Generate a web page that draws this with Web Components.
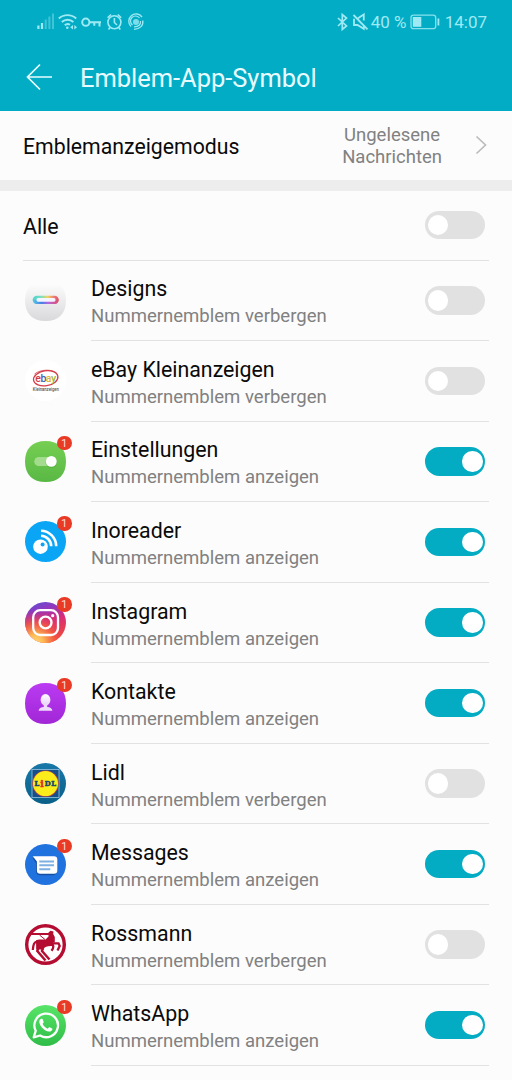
<!DOCTYPE html>
<html lang="de">
<head>
<meta charset="utf-8">
<title>Emblem-App-Symbol</title>
<style>
    body {
        margin: 0;
        background: #fcfcfc;
        font-family: Roboto, "Liberation Sans", sans-serif;
        overflow: hidden;
    }
</style>
</head>
<body>
<badge-settings></badge-settings>

<script>
const ICONS = {
    designs: `
        <defs>
            <linearGradient id="bg" x2="0" y2="1"><stop offset=".1" stop-color="#fcfcfc"/><stop offset="1" stop-color="#d9d9dc"/></linearGradient>
            <linearGradient id="rb"><stop offset="0" stop-color="#4ed3cb"/><stop offset=".3" stop-color="#75dfc6"/><stop offset=".58" stop-color="#f0d45e"/><stop offset=".8" stop-color="#f08079"/><stop offset="1" stop-color="#e04e68"/></linearGradient>
            <linearGradient id="rc"><stop offset="0" stop-color="#56c9e4"/><stop offset=".35" stop-color="#4a7fe8"/><stop offset=".6" stop-color="#b567dc"/><stop offset="1" stop-color="#e04e68"/></linearGradient>
        </defs>
        <path d="M20.500 0C33.500 0 41 7.500 41 20.500S33.500 41 20.500 41 0 33.500 0 20.500 7.500 0 20.500 0Z" fill="url(#bg)"/>
        <rect x="7.700" y="15.700" width="26" height="8.300" rx="4.150" fill="url(#rb)"/>
        <path d="M7.700 19.800H33.700A4.150 4.150 0 0 1 29.500 24H11.900A4.150 4.150 0 0 1 7.700 19.800Z" fill="url(#rc)"/>
        <rect x="11.500" y="18.100" width="19" height="3.600" rx="1.600" fill="#f5f5ff"/>`,
    ebay: `
        <circle cx="20.500" cy="20.500" r="20.500" fill="#fff"/>
        <ellipse cx="20.700" cy="18.300" rx="12.300" ry="7.500" transform="rotate(-9 20.700 18.300)" fill="none" stroke="#d43c49" stroke-width="1.300"/>
        <path d="M9.500 14C15 9.500 27 8.500 32 13.500" fill="none" stroke="#d43c49" stroke-width=".8"/>
        <text y="22" font-size="10.500" font-weight="500" letter-spacing="-.5"><tspan x="10.300" fill="#d23b49">e</tspan><tspan fill="#3e62b4">b</tspan><tspan fill="#e3b332">a</tspan><tspan fill="#9bb83c">y</tspan></text>
        <text x="7.800" y="30.700" font-size="4.800" font-weight="500" textLength="26" lengthAdjust="spacingAndGlyphs" fill="#5c5050">Kleinanzeigen</text>`,
    settings: `
        <defs><linearGradient id="bg" x2="0" y2="1"><stop offset="0" stop-color="#76cf53"/><stop offset="1" stop-color="#59b844"/></linearGradient></defs>
        <path d="M20.500 0C33.500 0 41 7.500 41 20.500S33.500 41 20.500 41 0 33.500 0 20.500 7.500 0 20.500 0Z" fill="url(#bg)"/>
        <rect x="9.300" y="16" width="19" height="9" rx="4.500" fill="#a4dc8e"/>
        <circle cx="26.300" cy="21.200" r="5.700" fill="#3f9832" opacity=".35"/>
        <circle cx="26.300" cy="20.400" r="5.400" fill="#fff"/>`,
    inoreader: `
        <circle cx="20.500" cy="20.500" r="20.500" fill="#0ba5f5"/>
        <circle cx="15.500" cy="25.700" r="7.300" fill="#fff"/>
        <circle cx="17.600" cy="23.600" r="2" fill="#0ba5f5"/>
        <path d="M16 14.800A10.500 10.500 0 0 1 26.200 25.300M16 9.800A15.500 15.500 0 0 1 31.200 25.300" fill="none" stroke="#fff" stroke-width="2.600"/>`,
    instagram: `
        <defs>
            <linearGradient id="bg" x2=".35" y2="1"><stop offset="0" stop-color="#5353d5"/><stop offset=".3" stop-color="#9038c0"/><stop offset=".6" stop-color="#d82c78"/><stop offset="1" stop-color="#ee4540"/></linearGradient>
            <radialGradient id="sun" cx=".25" cy="1" r=".8"><stop offset="0" stop-color="#ffdc7d"/><stop offset=".25" stop-color="#fdbb55"/><stop offset=".6" stop-color="#f4603f" stop-opacity=".8"/><stop offset="1" stop-color="#e03060" stop-opacity="0"/></radialGradient>
        </defs>
        <circle cx="20.500" cy="20.500" r="20.500" fill="url(#bg)"/>
        <circle cx="20.500" cy="20.500" r="20.500" fill="url(#sun)"/>
        <rect x="8.200" y="8.200" width="24.800" height="24.800" rx="7" fill="none" stroke="#fff" stroke-width="2.300"/>
        <circle cx="20.600" cy="20.500" r="5.900" fill="none" stroke="#fff" stroke-width="2.400"/>
        <circle cx="27.700" cy="13.700" r="1.600" fill="#fff"/>`,
    contacts: `
        <defs>
            <linearGradient id="bg" x2="0" y2="1"><stop offset="0" stop-color="#ba3bf3"/><stop offset="1" stop-color="#a127d6"/></linearGradient>
            <linearGradient id="fg" x2="0" y2="1"><stop offset="0" stop-color="#fff"/><stop offset="1" stop-color="#e9cffa"/></linearGradient>
        </defs>
        <path d="M20.500 0C33.500 0 41 7.500 41 20.500S33.500 41 20.500 41 0 33.500 0 20.500 7.500 0 20.500 0Z" fill="url(#bg)"/>
        <ellipse cx="20.500" cy="16.800" rx="4.900" ry="5.800" fill="url(#fg)"/>
        <path d="M18.800 21.500H22.200V24C25 24.200 27.200 25.300 27.400 27.800H13.600C13.800 25.300 16 24.200 18.800 24Z" fill="#eedafa"/>`,
    lidl: `
        <defs><linearGradient id="bg" x2="0" y2="1"><stop offset="0" stop-color="#1878a8"/><stop offset="1" stop-color="#096089"/></linearGradient></defs>
        <circle cx="20.500" cy="20.500" r="20.500" fill="url(#bg)"/>
        <rect x="7" y="6.500" width="27" height="28" fill="#174f8b" stroke="#8bb8d6" stroke-width=".9"/>
        <circle cx="20.500" cy="20.600" r="13.200" fill="#cf4a35"/>
        <circle cx="20.500" cy="20.600" r="12.500" fill="#fbed1c"/>
        <g font-family="DejaVu Serif" font-weight="700" font-size="6.800" fill="#16446e" stroke="#16446e" stroke-width=".5">
            <text x="9.600" y="23.200">L</text><text x="19.700" y="23.200">D</text><text x="26.200" y="23.200">L</text>
            <text x="15.300" y="23.900" font-size="9" fill="#d92c2c" stroke="#d92c2c">i</text>
        </g>`,
    messages: `
        <circle cx="20.500" cy="20.500" r="20.500" fill="#2072df"/>
        <path d="M7.500 13.800 11 19V27.500Q11.500 31 15 31.200H27.500Q31.500 31.200 32 27.500V15Z" fill="#154fa3"/>
        <path d="M7.800 12.300H29Q32.300 12.300 32.300 15.600V26.500Q32.300 29.800 29 29.800H15.200Q11.900 29.800 11.900 26.500V17.500Z" fill="#fff"/>
        <path d="M14.300 17.400H29M14.300 21.300H29M14.300 25.200H25.300" stroke="#7fb0e2" stroke-width="2"/>`,
    rossmann: `
        <circle cx="20.500" cy="20.500" r="18.800" fill="#fff" stroke="#b40d31" stroke-width="3.400"/>
        <path d="M11 16.300 14 15.500H20.500L23.500 12.500V8.500L25.500 6.800 28.500 7.500 28.200 10 29.800 13V18.500H28L27 22C22.500 21.800 20 22.500 18 25.500H11.200Z" fill="#b40d31"/>
        <g fill="none" stroke="#b40d31">
            <path d="M6 10H24" stroke-width="2"/>
            <path d="M14.500 11 20 15.500" stroke-width="1"/>
            <path d="M12.500 17.500C9 17.800 8.300 20.500 7.800 26" stroke-width="2.200"/>
            <path d="M27 19.300H33.500L34.700 22 32.500 26.500M26 20.500C29 21 29 23.500 26.500 26.800" stroke-width="2.300"/>
            <path d="M13.500 23.500 12.300 27 20.500 36.500M18 24 17 27 24.500 35.500" stroke-width="2.500"/>
        </g>`,
    whatsapp: `
        <defs><linearGradient id="bg" x2="0" y2="1"><stop offset="0" stop-color="#57e468"/><stop offset="1" stop-color="#2fbd48"/></linearGradient></defs>
        <circle cx="20.500" cy="20.500" r="20.500" fill="url(#bg)"/>
        <path d="M8.700 32.300 10.700 25.800A11.800 11.800 0 1 1 15.100 30.500Z" fill="none" stroke="#fff" stroke-width="2.300" stroke-linejoin="round"/>
        <path d="M16.300 13.700C15 14.200 14 15.600 14.300 17.300 15 21.500 19.500 26 23.800 26.600 25.800 26.800 27.300 25.500 27.500 23.700L24.300 21.900 22.700 23.700C20.400 22.900 18.200 20.700 17.600 18.800L18.800 17.200 17.600 13.900Q17 13.500 16.300 13.700Z" fill="#fff"/>`
};

const APPS = [
    { name: 'Designs', icon: 'designs', on: false },
    { name: 'eBay Kleinanzeigen', icon: 'ebay', on: false },
    { name: 'Einstellungen', icon: 'settings', on: true },
    { name: 'Inoreader', icon: 'inoreader', on: true },
    { name: 'Instagram', icon: 'instagram', on: true },
    { name: 'Kontakte', icon: 'contacts', on: true },
    { name: 'Lidl', icon: 'lidl', on: false },
    { name: 'Messages', icon: 'messages', on: true },
    { name: 'Rossmann', icon: 'rossmann', on: false },
    { name: 'WhatsApp', icon: 'whatsapp', on: true }
];

class StatusBar extends HTMLElement {
    constructor() {
        super();
        this.attachShadow({ mode: 'open' });
    }

    connectedCallback() {
        this.shadowRoot.innerHTML = `
            <style>
                :host {
                    display: flex;
                    justify-content: space-between;
                    align-items: center;
                    height: 43px;
                    padding: 0 25px 0 36px;
                    color: #9eeaf4;
                    font-size: 17px;
                    line-height: 22px;
                }
                div { display: flex; align-items: center; }
                svg { display: block; fill: none; stroke: currentColor; }
                span { padding-top: 1px; }
                .battery-level { width: 39.500px; margin-left: 1px; }
                .time { margin-left: 3.500px; }
            </style>
            <div>
                <svg width="110" height="22" viewBox="36 10.500 110 22" stroke-width="1.600">
                    <path d="M38.400 28.500V25M42 28.500V22.500" stroke-width="2.200"/>
                    <path d="M45.700 28.500V19M49.400 28.500V16M53 28.500V13" stroke-width="2" opacity=".4"/>
                    <path d="M58.800 18A12.800 12.800 0 0 1 76.200 18M61.800 21.500A8.500 8.500 0 0 1 73.400 21.500M64.800 24.700A4.200 4.200 0 0 1 70 24.200" stroke-width="1.900"/>
                    <circle cx="67.300" cy="27.200" r="1.300" fill="currentColor" stroke="none"/>
                    <path d="M73 24.500V29L70.200 26.700ZM74.300 24.500V29L77 26.700Z" fill="currentColor" stroke="none"/>
                    <circle cx="85.800" cy="21.700" r="3.600" stroke-width="2"/>
                    <path d="M89.400 21.700H101M94.300 21.700V25.300M99.500 21.700V26" stroke-width="2"/>
                    <circle cx="114.400" cy="21.800" r="6.500"/>
                    <path d="M114.400 17.500V22L117 24.500M107.600 17.300 111 14M121.200 17.300 117.800 14M110 27 108.500 29M118.800 27 120.300 29"/>
                    <path d="M142 16.500A7.300 7.300 0 1 0 131 26M142.800 20C143.500 25 140.200 28.500 134 28.800" stroke-width="1.300"/>
                    <path d="M139.500 17.500A5 5 0 1 0 132.500 24.500M140.500 20.500C141 24 138.500 26.500 134 26.400" stroke-width="1.200"/>
                    <circle cx="136" cy="21.400" r="3" fill="currentColor" stroke="none" opacity=".8"/>
                </svg>
            </div>
            <div>
                <svg width="34" height="22" viewBox="336 10.500 34 22" stroke-width="1.700">
                    <path d="M338 17.500 346.500 25.500 342.300 29V14L346.500 17.500 338 25.500"/>
                    <path d="M358 17.800 363.800 14V20M363.800 24.500V28.300L357.500 24.500H354V18.300M353.500 14.500 367.500 28.800" stroke-width="1.800"/>
                </svg>
                <span class="battery-level">40 %</span>
                <svg width="31" height="22" viewBox="410 10.500 31 22" stroke-width="1.300">
                    <rect x="411" y="14.600" width="24.700" height="13.600" rx="2.500" opacity=".85"/>
                    <rect x="412.800" y="16.500" width="8.500" height="9.800" fill="currentColor" stroke="none"/>
                    <path d="M438.400 18V25" stroke-width="1.800"/>
                </svg>
                <span class="time">14:07</span>
            </div>
        `;
    }
}
customElements.define('status-bar', StatusBar);

class TitleBar extends HTMLElement {
    constructor() {
        super();
        this.attachShadow({ mode: 'open' });
    }

    connectedCallback() {
        this.shadowRoot.innerHTML = `
            <style>
                :host {
                    display: flex;
                    align-items: center;
                    height: 68px;
                    padding-left: 26px;
                    color: #e8fcff;
                    font-size: 25.450px;
                    line-height: 30px;
                }
                svg {
                    margin-right: 27px;
                    fill: none;
                    stroke: currentColor;
                    stroke-width: 1.700;
                }
                span { padding-top: 2px; }
            </style>
            <svg width="27" height="28" viewBox="0 0 27 28"><path d="M14 1.500 1.500 14 14 26.500M1.500 14H26"/></svg>
            <span><slot></slot></span>
        `;
    }
}
customElements.define('title-bar', TitleBar);

class ToggleSwitch extends HTMLElement {
    constructor() {
        super();
        this.attachShadow({ mode: 'open' });
    }

    connectedCallback() {
        this.shadowRoot.innerHTML = `
            <style>
                :host {
                    display: flex;
                    flex: none;
                    align-items: center;
                    box-sizing: border-box;
                    width: 60px;
                    height: 28.500px;
                    padding: 0 2.500px;
                    border-radius: 15px;
                    background: #e1e1e1;
                    cursor: pointer;
                }
                :host([on]) {
                    justify-content: flex-end;
                    background: #03acc3;
                }
                span {
                    width: 20.500px;
                    height: 20.500px;
                    border-radius: 50%;
                    background: #fff;
                }
            </style>
            <span></span>
        `;
        this.addEventListener('click', () => {
            this.toggleAttribute('on');
            this.dispatchEvent(new CustomEvent('toggle-change', { bubbles: true, composed: true }));
        });
    }
}
customElements.define('toggle-switch', ToggleSwitch);

class AppIcon extends HTMLElement {
    constructor() {
        super();
        this.attachShadow({ mode: 'open' });
    }

    connectedCallback() {
        const count = this.getAttribute('count');
        this.shadowRoot.innerHTML = `
            <style>
                :host {
                    display: block;
                    flex: none;
                    position: relative;
                    width: 41px;
                    height: 41px;
                }
                svg { display: block; }
                .badge {
                    position: absolute;
                    top: -5px;
                    right: -5.500px;
                    width: 14.500px;
                    height: 14.500px;
                    border-radius: 50%;
                    background: #e93a25;
                    color: #ffd9d2;
                    font-size: 11.500px;
                    line-height: 15.500px;
                    text-align: center;
                }
            </style>
            <svg width="41" height="41" viewBox="0 0 41 41">${ICONS[this.getAttribute('name')]}</svg>
            ${count ? `<span class="badge">${count}</span>` : ''}
        `;
    }
}
customElements.define('app-icon', AppIcon);

class AppRow extends HTMLElement {
    constructor() {
        super();
        this.attachShadow({ mode: 'open' });
    }

    connectedCallback() {
        this.render();
        this.shadowRoot.addEventListener('toggle-change', () => {
            this.toggleAttribute('on');
            this.render();
        });
    }

    render() {
        const on = this.hasAttribute('on');
        this.shadowRoot.innerHTML = `
            <style>
                :host {
                    display: flex;
                    align-items: center;
                    height: 80.530px;
                    padding: 0 23px 0 25px;
                }
                app-icon { margin-bottom: 1px; }
                .content {
                    display: flex;
                    flex: 1;
                    align-items: center;
                    justify-content: space-between;
                    box-sizing: border-box;
                    height: 100%;
                    margin-left: 25px;
                    padding-right: 4px;
                    border-bottom: 1px solid #e2e2e2;
                }
                .text { padding-top: 5px; }
                .name {
                    color: #0a0a0a;
                    font-size: 21.330px;
                    line-height: 27px;
                }
                .state {
                    color: #818181;
                    font-size: 18.550px;
                    line-height: 28px;
                }
            </style>
            <app-icon name="${this.getAttribute('icon')}" ${on ? 'count="1"' : ''}></app-icon>
            <div class="content">
                <div class="text">
                    <div class="name"><slot></slot></div>
                    <div class="state">Nummernemblem ${on ? 'anzeigen' : 'verbergen'}</div>
                </div>
                <toggle-switch ${on ? 'on' : ''}></toggle-switch>
            </div>
        `;
    }
}
customElements.define('app-row', AppRow);

class BadgeSettings extends HTMLElement {
    constructor() {
        super();
        this.attachShadow({ mode: 'open' });
    }

    connectedCallback() {
        this.shadowRoot.innerHTML = `
            <style>
                :host {
                    display: block;
                    height: 1080px;
                    overflow: hidden;
                    background: #fcfcfc;
                    color: #0a0a0a;
                    font-size: 21.330px;
                }
                header {
                    height: 110.700px;
                    background: #03acc5;
                }
                .mode {
                    display: flex;
                    align-items: center;
                    justify-content: space-between;
                    height: 69px;
                    padding: 0 25px 0 23px;
                }
                .mode > span { padding-top: 3px; font-size: 21.250px; }
                .mode .value {
                    display: flex;
                    align-items: center;
                    gap: 33px;
                    color: #818181;
                    font-size: 18.500px;
                    line-height: 22px;
                    text-align: center;
                }
                .value span { padding-top: 2px; }
                .mode svg { fill: none; stroke: #bcbcbc; stroke-width: 1.700; }
                .band { height: 11px; background: #ededed; }
                .all {
                    display: flex;
                    align-items: center;
                    justify-content: space-between;
                    box-sizing: border-box;
                    height: 70px;
                    margin: 0 23px;
                    padding-right: 4px;
                    border-bottom: 1px solid #e2e2e2;
                }
                .all span { padding-top: 3px; }
            </style>
            <header>
                <status-bar></status-bar>
                <title-bar>Emblem-App-Symbol</title-bar>
            </header>
            <div class="mode">
                <span>Emblemanzeigemodus</span>
                <div class="value">
                    <span>Ungelesene<br>Nachrichten</span>
                    <svg width="12" height="20" viewBox="0 0 12 20"><path d="M1.500 1.500 10.500 10 1.500 18.500"/></svg>
                </div>
            </div>
            <div class="band"></div>
            <div class="all">
                <span>Alle</span>
                <toggle-switch></toggle-switch>
            </div>
            ${APPS.map(app => `<app-row icon="${app.icon}" ${app.on ? 'on' : ''}>${app.name}</app-row>`).join('')}
        `;
    }
}
customElements.define('badge-settings', BadgeSettings);
</script>
</body>
</html>
